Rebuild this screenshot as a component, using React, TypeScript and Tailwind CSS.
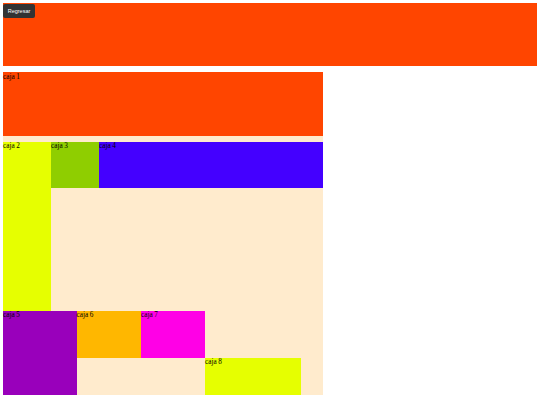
import React from "react";

const label = "text-[7.2px] leading-[9px] text-black";
const serif: React.CSSProperties = { fontFamily: "'Liberation Serif', 'Times New Roman', serif" };

function Box({ cls, children }: { cls: string; children: React.ReactNode }) {
  return (
    <div className={`${cls} ${label}`} style={serif}>
      {children}
    </div>
  );
}

export default function App() {
  return (
    <div className="w-[540px] h-[405px] bg-white relative overflow-hidden">
      <div className="pt-[3px] pl-[3px]">
        <div className="relative w-[534px] h-[63px] bg-[#ff4500]">
          <button
            className="absolute left-0 top-[1px] w-[32px] h-[14px] bg-[#333333] rounded-[2px] text-white text-[5.5px] flex items-center justify-center"
            style={{ fontFamily: "'Liberation Sans', Arial, sans-serif" }}
          >
            Regresar
          </button>
        </div>
        <div className="mt-[6px] w-[320px] h-[323px] bg-[#ffebcd] flex flex-col">
          <div className="h-[64px] pt-[1px] bg-[#ff4500]">
            <Box cls="">caja 1</Box>
          </div>
          <div className="h-[6px]" />
          <div className="flex h-[169px]">
            <Box cls="w-[48px] h-[169px] bg-[#e6ff00]">caja 2</Box>
            <Box cls="w-[48px] h-[46px] bg-[#8fce00]">caja 3</Box>
            <Box cls="flex-1 h-[46px] bg-[#4400ff]">caja 4</Box>
          </div>
          <div className="flex h-[84px] items-start">
            <Box cls="w-[73.5px] h-[84px] bg-[#9900bb]">caja 5</Box>
            <Box cls="w-[64.5px] h-[46.5px] bg-[#ffb700]">caja 6</Box>
            <Box cls="w-[64px] h-[46.5px] bg-[#ff00e6]">caja 7</Box>
            <Box cls="w-[96px] h-[37.5px] self-end bg-[#e6ff00]">caja 8</Box>
          </div>
        </div>
      </div>
    </div>
  );
}
